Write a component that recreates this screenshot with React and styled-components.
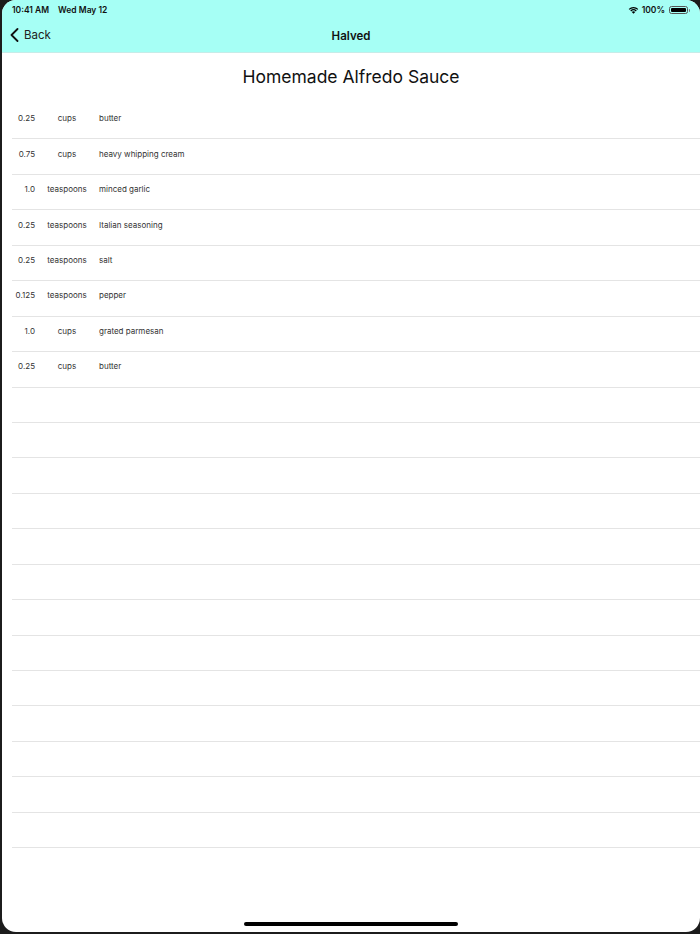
import React from "react";
import styled, { createGlobalStyle } from "styled-components";

const ingredients = [
  { qty: "0.25", unit: "cups", name: "butter" },
  { qty: "0.75", unit: "cups", name: "heavy whipping cream" },
  { qty: "1.0", unit: "teaspoons", name: "minced garlic" },
  { qty: "0.25", unit: "teaspoons", name: "Italian seasoning" },
  { qty: "0.25", unit: "teaspoons", name: "salt" },
  { qty: "0.125", unit: "teaspoons", name: "pepper" },
  { qty: "1.0", unit: "cups", name: "grated parmesan" },
  { qty: "0.25", unit: "cups", name: "butter" },
];

const EMPTY_ROWS = 13;

const App = () => {
  return (
    <>
      <GlobalStyle />
      <Screen>
        <NavBar>
          <StatusBar>
            <StatusLeft>
              <span>10:41 AM</span>
              <span>Wed May 12</span>
            </StatusLeft>
            <StatusRight>
              <svg width="11" height="8" viewBox="0 0 22 16">
                <path d="M11 15.5 L7.6 12 A5 5 0 0 1 14.4 12 Z" fill="#000" />
                <path d="M4.6 9 A9.5 9.5 0 0 1 17.4 9 L15.7 10.8 A7 7 0 0 0 6.3 10.8 Z" fill="#000" />
                <path d="M1.4 5.8 A14 14 0 0 1 20.6 5.8 L18.9 7.6 A11.5 11.5 0 0 0 3.1 7.6 Z" fill="#000" />
              </svg>
              <span>100%</span>
              <Battery>
                <BatteryFill />
              </Battery>
            </StatusRight>
          </StatusBar>
          <TitleBar>
            <BackButton>
              <svg width="9" height="14" viewBox="0 0 9 14">
                <path d="M7.5 1 L1.5 7 L7.5 13" fill="none" stroke="#111" strokeWidth="1.8" strokeLinecap="round" strokeLinejoin="round" />
              </svg>
              Back
            </BackButton>
            <NavTitle>Halved</NavTitle>
          </TitleBar>
        </NavBar>
        <Content>
          <RecipeTitle>Homemade Alfredo Sauce</RecipeTitle>
          <List>
            {ingredients.map((item, index) => (
              <Row key={index}>
                <Qty>{item.qty}</Qty>
                <Unit>{item.unit}</Unit>
                <Name>{item.name}</Name>
              </Row>
            ))}
            {Array.from({ length: EMPTY_ROWS }).map((_, index) => (
              <Row key={"e" + index} />
            ))}
          </List>
        </Content>
        <HomeIndicator />
      </Screen>
    </>
  );
};

export default App;

const GlobalStyle = createGlobalStyle`
  html, body {
    margin: 0;
    padding: 0;
    background: #1c1c1c;
    font-family: "Inter", "Liberation Sans", sans-serif;
  }
`;

const Screen = styled.div`
  position: relative;
  width: 698px;
  height: 932px;
  margin-left: 2px;
  background: #fff;
  border-radius: 14px;
  overflow: hidden;
  display: flex;
  flex-direction: column;
`;

const NavBar = styled.div`
  background: #a6fff5;
  height: 52px;
  border-bottom: 1px solid #c6ece8;
  display: flex;
  flex-direction: column;
  flex-shrink: 0;
`;

const StatusBar = styled.div`
  height: 20px;
  display: flex;
  align-items: center;
  justify-content: space-between;
  padding: 0 12px 0 10px;
  font-size: 8.5px;
  font-weight: 600;
  color: #111;
`;

const StatusLeft = styled.div`
  display: flex;
  gap: 9px;
`;

const StatusRight = styled.div`
  display: flex;
  align-items: center;
  gap: 3px;
`;

const Battery = styled.div`
  position: relative;
  width: 19px;
  height: 8px;
  border: 1px solid #555;
  border-radius: 2.5px;
  padding: 1px;
  box-sizing: border-box;
  margin-left: 1px;

  &::after {
    content: "";
    position: absolute;
    right: -3px;
    top: 2px;
    width: 1.5px;
    height: 3px;
    background: #777;
    border-radius: 0 1px 1px 0;
  }
`;

const BatteryFill = styled.div`
  width: 100%;
  height: 100%;
  background: #000;
  border-radius: 1px;
`;

const TitleBar = styled.div`
  position: relative;
  flex: 1;
  display: flex;
  align-items: center;
  justify-content: center;
  padding-bottom: 1px;
`;

const BackButton = styled.div`
  position: absolute;
  left: 8px;
  top: 8px;
  display: flex;
  align-items: center;
  gap: 5px;
  font-size: 11.5px;
  color: #222;
`;

const NavTitle = styled.div`
  font-size: 11.5px;
  font-weight: 600;
  color: #111;
`;

const Content = styled.div`
  flex: 1;
  display: flex;
  flex-direction: column;
`;

const RecipeTitle = styled.h1`
  margin: 0;
  height: 46px;
  display: flex;
  align-items: center;
  justify-content: center;
  font-size: 17.5px;
  font-weight: 400;
  color: #111;
`;

const List = styled.div`
  display: flex;
  flex-direction: column;
  margin-top: 5px;
`;

const Row = styled.div`
  height: 35.45px;
  box-sizing: border-box;
  display: flex;
  align-items: center;
  padding-bottom: 6px;
  margin-left: 10px;
  border-bottom: 1px solid #e4e4e4;
  font-size: 8px;
  color: #333;
`;

const Qty = styled.div`
  width: 23px;
  text-align: right;
`;

const Unit = styled.div`
  width: 64px;
  text-align: center;
`;

const Name = styled.div`
  flex: 1;
`;

const HomeIndicator = styled.div`
  position: absolute;
  bottom: 6px;
  left: 50%;
  transform: translateX(-50%);
  width: 214px;
  height: 4px;
  border-radius: 2px;
  background: #000;
`;
